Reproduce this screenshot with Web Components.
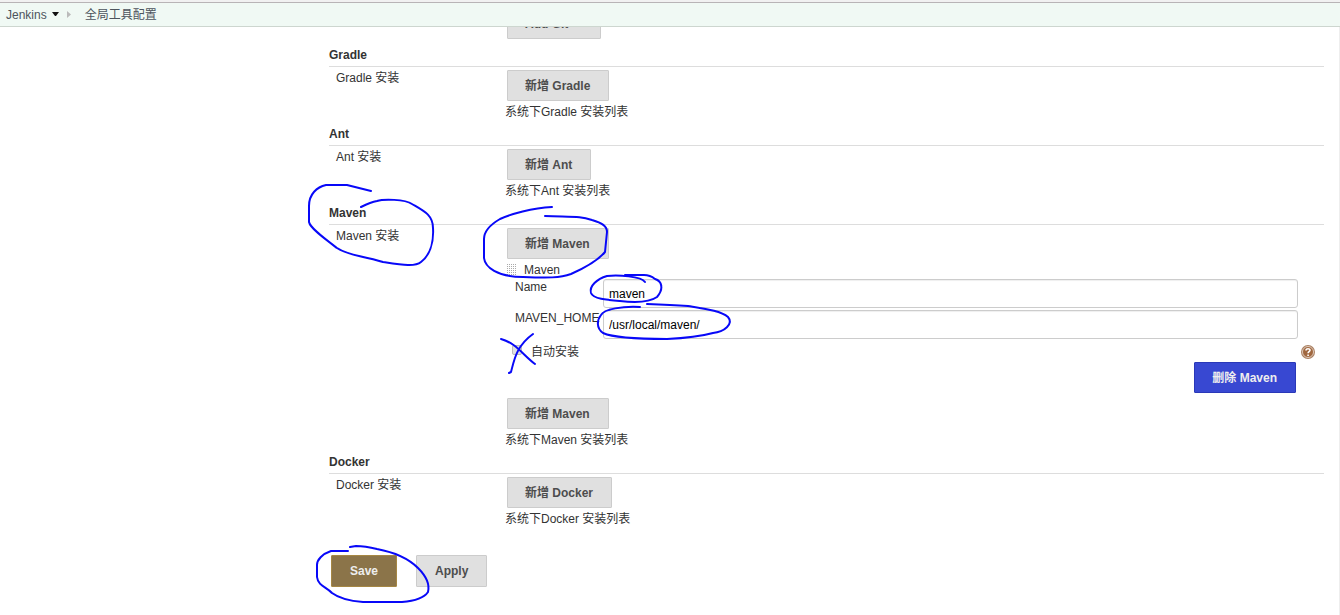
<!DOCTYPE html>
<html lang="zh-CN">
<head>
<meta charset="utf-8">
<title>全局工具配置 [Jenkins]</title>
<style>
html, body { height: 100%; }
body { margin: 0; background: #fff; color: #333; font: 12px/18px "Liberation Sans", Arial, "Noto Sans CJK SC", sans-serif; overflow: hidden; }
</style>
</head>
<body>
<jenkins-config></jenkins-config>
<script>
function define(name, html) {
  const template = document.createElement('template');
  template.innerHTML = html;
  customElements.define(name, class extends HTMLElement {
    constructor() {
      super();
      this.attachShadow({ mode: 'open' }).append(template.content.cloneNode(true));
    }
  });
}

define('yui-button', `
<style>
:host { display: inline-block; vertical-align: top; }
button { display: block; box-sizing: border-box; height: var(--button-height, 31px); margin: 0; padding: var(--button-padding, 0 18px 0 17px); border: 1px solid var(--edge, #ccc); border-radius: 1px; background: var(--fill, #e0e0e0); color: var(--ink, #4d4d4d); font: bold 12px/18px "Liberation Sans", Arial, "Noto Sans CJK SC", sans-serif; white-space: nowrap; }
:host([kind=danger]) { --fill: #3848d2; --edge: #2a38b8; --ink: #eee; }
:host([kind=primary]) { --fill: #8b7449; --edge: #a68744; --ink: #eee; }
:host([kind=menu]) { --button-padding: 0 32px 0 17px; }
</style>
<button type="button"><slot></slot></button>`);

define('crumb-bar', `
<style>
:host { display: block; flex: none; position: relative; z-index: 1; border-top: 2px solid #f1f1f1; }
nav { display: flex; align-items: center; box-sizing: border-box; height: 25px; padding: 0 6px; border-top: 1px solid #b8b4b6; border-bottom: 1px solid #cdd6cf; background: #f0f9f4; }
a { color: #4d545d; text-decoration: none; }
svg { display: block; }
.down { margin-left: 5px; }
.next { margin: 0 13px 0 8px; }
</style>
<nav aria-label="Breadcrumb">
<a href="#">Jenkins</a>
<svg class="down" width="7" height="5"><path d="M0 0H7L4 4H3Z" fill="#111"/></svg>
<svg class="next" width="5" height="7"><path d="M0 0L4 3.5L0 7Z" fill="#bbb"/></svg>
<a href="#">全局工具配置</a>
</nav>`);

define('tool-section', `
<style>
:host { display: block; }
h2 { margin: 0; padding-bottom: 2px; border-bottom: 1px solid #ddd; font: bold 12px/18px "Liberation Sans", Arial, sans-serif; }
.row { display: grid; grid-template-columns: 171px minmax(0, 1fr); padding: 3px 0 4px 7px; }
.label { line-height: 16px; }
.help { margin: 2px 0 0 -2px; }
.help, .label { white-space: nowrap; }
</style>
<h2><slot name="title"></slot></h2>
<div class="row">
<div class="label"><slot name="label"></slot></div>
<div><slot></slot><div class="help"><slot name="help"></slot></div></div>
</div>`);

define('drag-handle', `
<style>:host, svg { display: block; }</style>
<svg width="10" height="12"><defs><pattern id="dots" width="2" height="2" patternUnits="userSpaceOnUse"><path d="M0 0h1v1h-1z" fill="#aaa"/></pattern></defs><path d="M0 0H10V12H0Z" fill="url(#dots)"/></svg>`);

define('help-link', `
<style>:host, a, svg { display: block; }</style>
<a href="#" aria-label="Help"><svg width="14" height="14" viewBox="0 0 14 14"><circle cx="7" cy="7" r="7" fill="#aa8062"/><circle cx="7" cy="7" r="5.5" fill="#a0673f" stroke="#dfcabb"/><path d="M5 5.4C5 3.1 9.1 3.2 9 5.3C8.9 6.7 7.1 6.6 7.1 8.2M7.1 9.5V10.9" fill="none" stroke="#fff" stroke-width="1.6"/></svg></a>`);

define('maven-form', `
<style>
:host { display: block; margin-bottom: 5px; }
.head { display: flex; align-items: center; gap: 7px; height: 18px; margin-top: 2px; }
.fields { display: grid; grid-template-columns: 88px minmax(0, 1fr); gap: 2px 0; margin: 0 26px 0 8px; }
.fields label { white-space: nowrap; line-height: 16px; }
input[type=text] { box-sizing: border-box; width: 100%; height: 29px; padding: 1px 5px 0; border: 1px solid #ccc; border-radius: 3px; box-shadow: inset 0 1px 1px #0001; background: #fff; color: #000; font: 12px/18px "Liberation Sans", Arial, sans-serif; }
.auto { display: flex; align-items: center; height: 18px; margin: 4px 9px 0 5px; }
.auto label { flex: 1; margin-left: 9px; }
input[type=checkbox] { appearance: none; width: 10px; height: 10px; margin: 0 0 4px; border: 1px solid #bbb; border-radius: 2px; background: #e0e0e0; }
.remove { display: flex; justify-content: flex-end; margin: 1px 28px 0 0; }
</style>
<div class="head"><drag-handle></drag-handle><span>Maven</span></div>
<div class="fields">
<label for="name">Name</label><input type="text" id="name" value="maven">
<label for="home">MAVEN_HOME</label><input type="text" id="home" value="/usr/local/maven/">
</div>
<div class="auto"><input type="checkbox" id="auto"><label for="auto">自动安装</label><help-link></help-link></div>
<div class="remove"><yui-button kind="danger">删除 Maven</yui-button></div>`);

define('pen-marks', `
<style>
:host { display: block; position: absolute; top: 0; left: 0; z-index: 2; pointer-events: none; }
svg { display: block; }
</style>
<svg width="760" height="610" fill="none" stroke="#0808f8" stroke-width="2" stroke-linecap="round" stroke-linejoin="round" aria-hidden="true">
<path d="M371 191L347 185H326C317 187 309 194 309 206V222C310 228 325 239 337 248C349 256 361 255 383 262C403 265 415 267 421 262C429 256 434 244 433 228C433 215 424 211 412 204C405 199 383 199 377 201Q371 202 361 207"/>
<path d="M552 207C532 208 511 214 500 219C488 226 484 233 484 239V258C485 267 497 277 523 277C548 278 560 278 571 274C589 266 600 258 605 252L607 232C607 226 602 223 592 220C580 216 575 217 545 216"/>
<path d="M645 282C641 276 618 275 607 276C597 279 589 286 591 293C593 299 607 300 620 301C638 303 650 302 657 297C664 289 662 281 655 279Q650 275 644 275H625"/>
<path d="M640 307C623 306 604 309 601 315C597 320 596 328 603 333C614 338 637 339 667 339C689 338 702 336 713 333C724 332 734 324 728 317C721 311 706 309 688 306Q672 305 647 304"/>
<path d="M501 339C516 343 523 355 535 364M533 334C516 346 514 361 511 372L509 373"/>
<path d="M348 551H331C322 554 317 560 317 565V577C318 586 327 587 332 593C340 599 350 601 363 602H402C414 601 424 598 428 592C430 584 426 576 418 568C409 559 393 552 377 549Q365 546 356 546L350 547"/>
</svg>`);

define('jenkins-config', `
<style>
:host { display: flex; flex-direction: column; height: 100%; position: relative; overflow: hidden; }
main { flex: 1; min-height: 0; overflow: hidden; border-right: 1px solid #eee; padding: 0 15px 0 329px; }
.cut { margin: -19px 0 7px 178px; }
.actions { display: flex; gap: 19px; margin: 23px 0 0 2px; --button-height: 32px; --button-padding: 0 18px; }
</style>
<crumb-bar></crumb-bar>
<main>
<div class="cut"><yui-button kind="menu">Add Git</yui-button></div>
<tool-section><span slot="title">Gradle</span><span slot="label">Gradle 安装</span><yui-button>新增 Gradle</yui-button><span slot="help">系统下Gradle 安装列表</span></tool-section>
<tool-section><span slot="title">Ant</span><span slot="label">Ant 安装</span><yui-button>新增 Ant</yui-button><span slot="help">系统下Ant 安装列表</span></tool-section>
<tool-section><span slot="title">Maven</span><span slot="label">Maven 安装</span><yui-button>新增 Maven</yui-button><maven-form></maven-form><yui-button>新增 Maven</yui-button><span slot="help">系统下Maven 安装列表</span></tool-section>
<tool-section><span slot="title">Docker</span><span slot="label">Docker 安装</span><yui-button>新增 Docker</yui-button><span slot="help">系统下Docker 安装列表</span></tool-section>
<div class="actions"><yui-button kind="primary">Save</yui-button><yui-button>Apply</yui-button></div>
</main>
<pen-marks></pen-marks>`);
</script>
</body>
</html>
